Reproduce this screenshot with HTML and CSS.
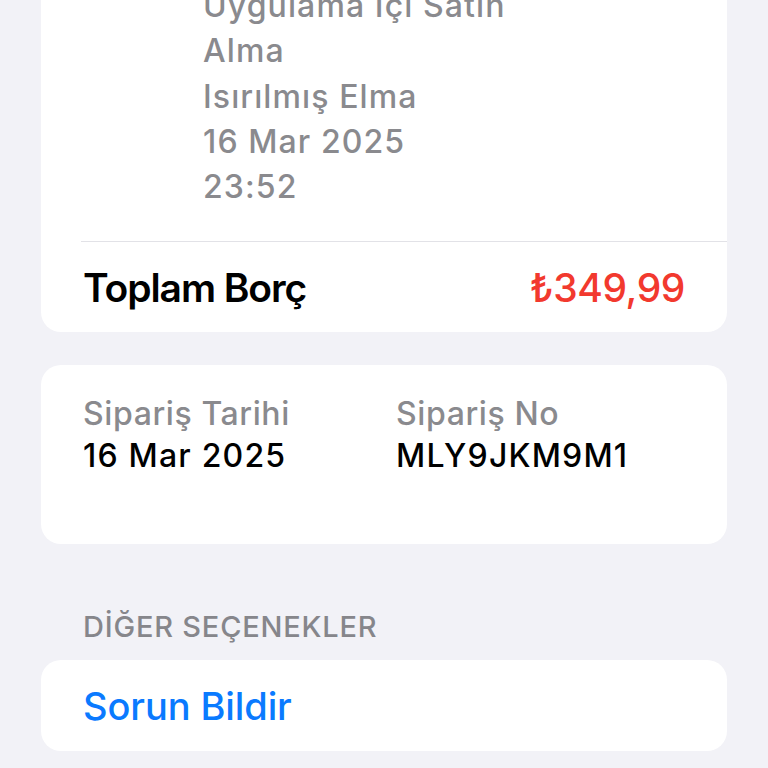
FILE: index.html
```html
<!DOCTYPE html>
<html lang="tr">
<head>
<meta charset="utf-8">
<title>Satın Alma</title>
<link rel="stylesheet" href="styles.css">
</head>
<body>
<main class="page">
  <section class="card card-receipt">
    <div class="item-lines">
      <div class="line">Uygulama İçi Satın</div>
      <div class="line">Alma</div>
      <div class="line">Isırılmış Elma</div>
      <div class="line">16 Mar 2025</div>
      <div class="line">23:52</div>
    </div>
    <div class="divider"></div>
    <div class="total-row">
      <span class="total-label">Toplam Borç</span>
      <span class="total-amount">₺349,99</span>
    </div>
  </section>

  <section class="card card-info">
    <div class="info-col">
      <div class="info-label">Sipariş Tarihi</div>
      <div class="info-value">16 Mar 2025</div>
    </div>
    <div class="info-col">
      <div class="info-label">Sipariş No</div>
      <div class="info-value">MLY9JKM9M1</div>
    </div>
  </section>

  <h2 class="section-header">DİĞER SEÇENEKLER</h2>

  <section class="card card-action">
    <span class="action-link">Sorun Bildir</span>
  </section>
</main>
</body>
</html>
```

FILE: styles.css
```css
* { box-sizing: border-box; }
html, body {
  margin: 0;
  padding: 0;
  background: #f2f2f7;
}
body {
  width: 768px;
  height: 768px;
  overflow: hidden;
  font-family: Inter, "Liberation Sans", Arial, sans-serif;
  -webkit-font-smoothing: antialiased;
}
.page {
  display: flex;
  flex-direction: column;
  padding: 0 41px;
  margin-top: -37px;
}
.card {
  background: #ffffff;
  border-radius: 20px;
}
.card-receipt {
  padding: 20px 0 0 40px;
}
.item-lines {
  padding-left: 122px;
  padding-bottom: 32px;
  color: #8a8a8e;
  font-size: 32px;
  font-weight: 500;
  line-height: 45.25px;
  letter-spacing: 1.1px;
}
.divider {
  height: 1px;
  background: #e2e2e7;
}
.total-row {
  height: 90px;
  display: flex;
  align-items: center;
  justify-content: space-between;
  padding-right: 42px;
  padding-left: 2px;
}
.total-label {
  font-size: 39px;
  font-weight: 600;
  color: #000;
  letter-spacing: -1.1px;
}
.total-amount {
  font-size: 39px;
  font-weight: 500;
  color: #f2392e;
  letter-spacing: -0.4px;
}
.card-info {
  margin-top: 33px;
  height: 179px;
  padding: 28px 0 0 42px;
  display: grid;
  grid-template-columns: 313px 1fr;
  align-content: start;
}
.info-label {
  font-size: 32px;
  line-height: 42px;
  color: #8a8a8e;
  font-weight: 500;
  letter-spacing: 0.6px;
}
.info-value {
  font-size: 32px;
  line-height: 42px;
  color: #000;
  font-weight: 500;
  letter-spacing: 1.2px;
}
.section-header {
  margin: 66px 0 16px 42px;
  font-size: 29px;
  line-height: 34px;
  font-weight: 500;
  color: #86868b;
  letter-spacing: 0.8px;
}
.card-action {
  height: 91px;
  display: flex;
  align-items: center;
  padding-left: 42px;
}
.action-link {
  font-size: 38px;
  font-weight: 500;
  color: #0a7aff;
  letter-spacing: -0.1px;
}
```
